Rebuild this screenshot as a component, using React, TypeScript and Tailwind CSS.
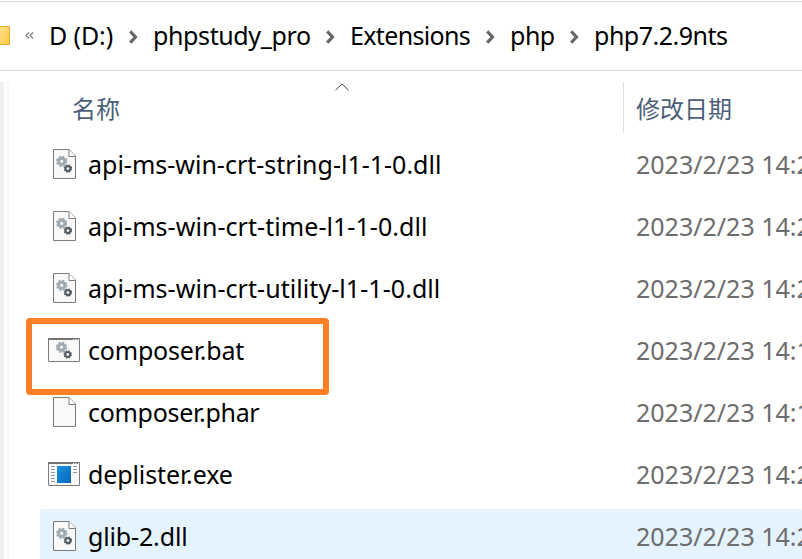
import React from "react";

function Gears({ x, y }: { x: number; y: number }) {
  return (
    <g transform={`translate(${x} ${y})`} fill="none">
      <circle cx="5.5" cy="5.5" r="3.1" stroke="#9fa9b1" strokeWidth="2.9" />
      <circle cx="5.5" cy="5.5" r="4.8" stroke="#9fa9b1" strokeWidth="1.8" strokeDasharray="2.2 1.57" />
      <circle cx="11.7" cy="12.8" r="2.4" stroke="#525a61" strokeWidth="1.9" />
      <circle cx="11.7" cy="12.8" r="3.5" stroke="#525a61" strokeWidth="1.4" strokeDasharray="1.6 1.149" />
    </g>
  );
}

function PageIcon({ gears }: { gears?: boolean }) {
  return (
    <svg className="ml-[2px]" width="24" height="31" viewBox="0 0 24 31">
      <path d="M.5.5H16L22.5 7V29.5H.5Z" fill="#f9f9f9" stroke="#7b7b7b" />
      <path d="M16 .5V7.5H22.5" fill="#fff" stroke="#7b7b7b" />
      {gears && <Gears x={3.2} y={6.8} />}
    </svg>
  );
}

function WindowIcon({ exe }: { exe?: boolean }) {
  return (
    <svg width="32" height="24" viewBox="0 0 32 24">
      <rect x=".5" y=".5" width="31" height="23" rx=".5" fill="#f9f9f9" stroke="#7b7b7b" />
      <path d="M0 1H32" stroke="#77746f" strokeWidth="2" />
      <path d="M25 1.5h1.3M27.5 1.5h1.3M30 1.5h1.3" stroke="#eee" />
      {exe ? (
        <>
          <defs>
            <linearGradient id="blue" x1="0" y1="0" x2="1" y2="1">
              <stop stopColor="#1b93e0" />
              <stop offset="1" stopColor="#0865bd" />
            </linearGradient>
          </defs>
          <rect x="9" y="4" width="14" height="17" fill="url(#blue)" />
          <path d="M3 4.5h4M3 7.5h4M3 10.5h4M3 13.5h4M3 16.5h4M3 19.5h4M25 4.5h4M25 7.5h4M25 10.5h4" stroke="#999" />
        </>
      ) : (
        <Gears x={8} y={3.7} />
      )}
    </svg>
  );
}

const files = [
  { name: "api-ms-win-crt-string-l1-1-0.dll", icon: <PageIcon gears />, time: "14:23", ls: "" },
  { name: "api-ms-win-crt-time-l1-1-0.dll", icon: <PageIcon gears />, time: "14:23", ls: "tracking-[0.06px]" },
  { name: "api-ms-win-crt-utility-l1-1-0.dll", icon: <PageIcon gears />, time: "14:23", ls: "tracking-[0.06px]" },
  { name: "composer.bat", icon: <WindowIcon />, time: "14:19", ls: "tracking-[-0.2px]" },
  { name: "composer.phar", icon: <PageIcon />, time: "14:19", ls: "tracking-[-0.3px]" },
  { name: "deplister.exe", icon: <WindowIcon exe />, time: "14:23", ls: "tracking-[-0.12px]" },
  { name: "glib-2.dll", icon: <PageIcon gears />, time: "14:23", ls: "tracking-[-0.15px]" },
];

const crumbs = [
  { label: "D (D:)", box: "w-[104px] tracking-[-0.1px]" },
  { label: "phpstudy_pro", box: "w-[197px] tracking-[-0.38px]" },
  { label: "Extensions", box: "w-[160px] tracking-[-0.65px]" },
  { label: "php", box: "w-[84px] tracking-[-0.5px]" },
  { label: "php7.2.9nts", box: "w-[160px] tracking-[-0.5px]" },
];

function Chevron() {
  return (
    <svg className="mr-[15px] mt-[3px] shrink-0" width="9" height="14" viewBox="0 0 9 14">
      <path d="M1.2 1.4L6.5 7L1.2 12.6" fill="none" stroke="#666" strokeWidth="3.1" />
    </svg>
  );
}

export default function App() {
  return (
    <div className="relative flex h-[559px] w-[802px] flex-col overflow-hidden bg-white text-[25px] leading-[34px] whitespace-nowrap text-black [font-family:'Noto_Sans','Noto_Sans_CJK_SC',sans-serif]">
      <header className="mt-px flex h-[70px] shrink-0 items-center border-y border-[#d9d9d9] pb-[2px]">
        <div className="h-[19px] w-[10px] rounded-r-[1px] border border-l-0 border-[#e9ad2b] bg-linear-to-br from-[#ffe08a] to-[#ffc937]" />
        <svg className="ml-[15px] mr-[15px]" width="9" height="7" viewBox="0 0 9 7">
          <path d="M4 .5L1 3.5L4 6.5M8 .5L5 3.5L8 6.5" fill="none" stroke="#777" strokeWidth="1.2" />
        </svg>
        {crumbs.map((c, i) => (
          <div key={c.label} className={`flex shrink-0 items-center justify-between ${c.box}`}>
            <span>{c.label}</span>
            {i < 4 && <Chevron />}
          </div>
        ))}
      </header>
      <main className="mt-[11px] flex flex-1">
        <div className="w-1 bg-[#f0f0f0]" />
        <div className="ml-[3px] w-[2px] bg-[#f7f7f7]" />
        <div className="ml-[31px] flex flex-1 flex-col">
          <div className="flex h-[55px] text-[24px] text-[#4c607a]">
            <div className="flex w-[583px] pl-8 pt-[10px]">
              <span className="w-[263px]">名称</span>
              <svg width="14" height="8" viewBox="0 0 14 8" className="-mt-[9px]">
                <path d="M.5 7.2L7 .9L13.5 7.2" fill="none" stroke="#444" />
              </svg>
            </div>
            <div className="h-[51px] border-l border-[#e0e0e0] pl-3 pt-[10px]">修改日期</div>
          </div>
          {files.map((f, i) => (
            <div key={f.name} className={`flex h-[62px] shrink-0 items-center pb-[8px] ${i === 6 ? "rounded-t-[2px] bg-[#e5f3ff]" : ""}`}>
              <div className="flex w-12 justify-center">{f.icon}</div>
              <span className={`w-[548px] ${f.ls}`}>{f.name}</span>
              <span className="w-0 text-[#6d6d6d]">2023/2/23 {f.time}</span>
            </div>
          ))}
        </div>
      </main>
      <div className="absolute left-[26px] top-[318px] h-[77px] w-[303px] rounded-[4px] border-[6px] border-[#ff7f27]" />
    </div>
  );
}
